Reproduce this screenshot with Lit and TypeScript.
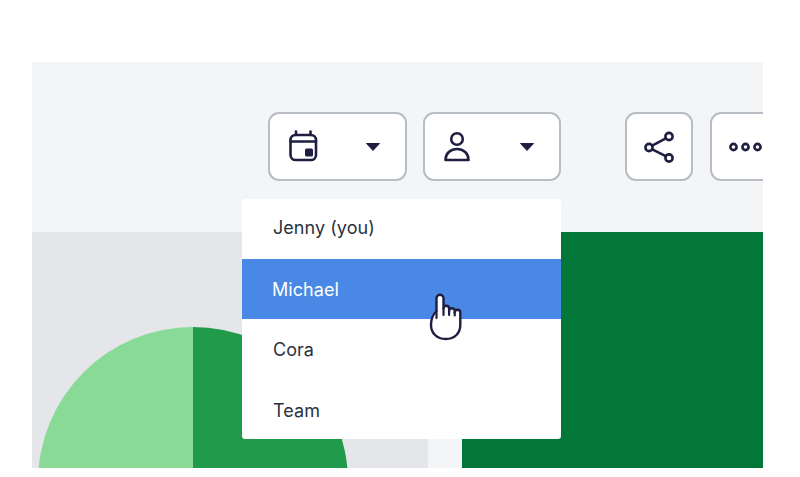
import { LitElement, html, css } from "lit";
import { customElement } from "lit/decorators.js";

const stroke = "#1f1e42";

@customElement("app-root")
export class AppRoot extends LitElement {
  static styles = css`
    :host {
      display: block;
      width: 800px;
      height: 477px;
      background: #fff;
      font-family: Inter, "Noto Sans", sans-serif;
      overflow: hidden;
    }
    .page {
      padding: 62px 37px 9px 32px;
      height: 477px;
      box-sizing: border-box;
    }
    .frame {
      position: relative;
      height: 406px;
      background: #f4f5f7;
      overflow: hidden;
      display: flex;
      flex-direction: column;
    }
    .toolbar {
      height: 170px;
      box-sizing: border-box;
      padding: 50px 0 0 236px;
      display: flex;
      align-items: flex-start;
      flex: none;
    }
    .btn {
      height: 69px;
      box-sizing: border-box;
      background: #fff;
      border: 2px solid #b8bcc3;
      border-radius: 11px;
      display: flex;
      align-items: center;
      justify-content: center;
      flex: none;
    }
    .btn svg { display: block; }
    .select {
      width: 139px;
      justify-content: flex-start;
      padding-left: 17px;
    }
    .select.user { width: 138px; margin-left: 16px; padding-left: 17px; }
    .select .caret { margin-left: 46px; }
    .select.user .caret { margin-left: 49px; }
    .share { width: 68px; margin-left: 64px; padding-left: 1px; }
    .more { width: 90px; margin-left: 17px; justify-content: flex-start; padding-left: 16px; }
    .content {
      flex: 1;
      display: flex;
      min-height: 0;
    }
    .gray {
      width: 396px;
      background: #e4e6e9;
      position: relative;
      overflow: hidden;
    }
    .pie { position: absolute; left: 6px; top: 95px; display: block; }
    .spacer { width: 34px; }
    .green { flex: 1; background: #027737; }
    .menu {
      position: absolute;
      left: 210px;
      top: 137px;
      width: 319px;
      background: #fff;
      border-radius: 3px;
      overflow: hidden;
      font-size: 18px;
      color: #2c3240;
      letter-spacing: 0.05px;
    }
    .item {
      height: 60px;
      box-sizing: border-box;
      padding-left: 31px;
      display: flex;
      align-items: center;
    }
    .item:first-child { padding-bottom: 4px; }
    .item:last-child { padding-top: 2px; }
    .item.active {
      background: #4a88e6;
      color: #fff;
      padding-left: 30px;
    }
    .hand { position: absolute; left: 396px; top: 230px; display: block; }
  `;

  render() {
    const caret = html`<svg class="caret" width="16" height="10" viewBox="0 0 16 10"><path d="M1.500 1.500h13L8 8.500z" fill="${stroke}" stroke="${stroke}" stroke-linejoin="round"/></svg>`;
    return html`
      <div class="page">
        <div class="frame">
          <div class="toolbar">
            <div class="btn select">
              <svg width="32" height="34" viewBox="0 0 32 34" fill="none" stroke="${stroke}" stroke-width="2.6">
                <rect x="3.500" y="5" width="25.500" height="25" rx="5"/>
                <path d="M3.500 11.500h25.500M9 1.500v3.500M23.500 1.500v3.500" stroke-linecap="round"/>
                <rect x="18" y="18.500" width="8" height="8" rx="1.500" fill="${stroke}" stroke="none"/>
              </svg>
              ${caret}
            </div>
            <div class="btn select user">
              <svg width="28" height="32" viewBox="0 0 28 32" fill="none" stroke="${stroke}" stroke-width="2.6">
                <circle cx="15" cy="8" r="5.800"/>
                <path d="M3.500 29c0-6.500 5-11 11.500-11s11.500 4.500 11.500 11z" stroke-linejoin="round"/>
              </svg>
              ${caret}
            </div>
            <div class="btn share">
              <svg width="32" height="34" viewBox="0 0 32 34" fill="none" stroke="${stroke}" stroke-width="2.6">
                <circle cx="25" cy="6.500" r="3.600"/>
                <circle cx="5" cy="17.500" r="3.600"/>
                <circle cx="25" cy="28" r="3.600"/>
                <path d="M8.200 15.700 21.800 8.300M8.200 19.300 21.800 26.200"/>
              </svg>
            </div>
            <div class="btn more">
              <svg width="34" height="12" viewBox="0 0 34 12" fill="none" stroke="${stroke}" stroke-width="2.600">
                <circle cx="5.500" cy="6" r="3.100"/>
                <circle cx="17.500" cy="6" r="3.100"/>
                <circle cx="29.500" cy="6" r="3.100"/>
              </svg>
            </div>
          </div>
          <div class="content">
            <div class="gray">
              <svg class="pie" width="310" height="310" viewBox="0 0 310 310">
                <path d="M155 0A155 155 0 0 0 155 310z" fill="#88da96"/>
                <path d="M155 0A155 155 0 0 1 155 310z" fill="#219a4b"/>
              </svg>
            </div>
            <div class="spacer"></div>
            <div class="green"></div>
          </div>
          <div class="menu">
            <div class="item">Jenny (you)</div>
            <div class="item active">Michael</div>
            <div class="item">Cora</div>
            <div class="item">Team</div>
          </div>
          <svg class="hand" width="38" height="50" viewBox="0 0 38 50">
            <path d="M8.500 19V6.200a3.500 3.500 0 0 1 7 0V16.500a2.800 2.800 0 0 1 5.600 0v2.500a2.800 2.800 0 0 1 5.600 0v1.500a2.800 2.800 0 0 1 5.600 0V33c0 8-5.500 14-14.500 14S3 41 3 33c0-6 2-10.500 5.500-14z" fill="#fff" stroke="${stroke}" stroke-width="2.400" stroke-linejoin="round"/>
            <path d="M8.500 19v7M15.500 16.500v6.500M21.100 19v4M26.700 20.500v3" fill="none" stroke="${stroke}" stroke-width="2.200" stroke-linecap="round"/>
          </svg>
        </div>
      </div>
    `;
  }
}
